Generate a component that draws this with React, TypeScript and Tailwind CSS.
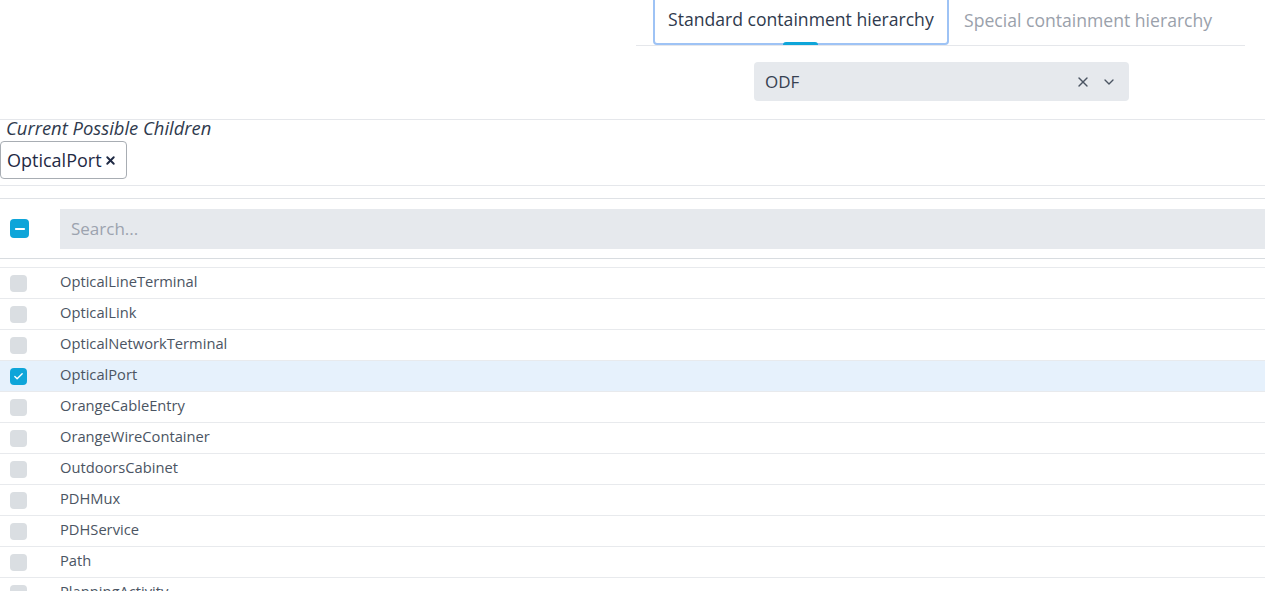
import { X, ChevronDown, Check, Minus } from "lucide-react";

const items = [
  "OpticalLineTerminal",
  "OpticalLink",
  "OpticalNetworkTerminal",
  "OpticalPort",
  "OrangeCableEntry",
  "OrangeWireContainer",
  "OutdoorsCabinet",
  "PDHMux",
  "PDHService",
  "Path",
  "PlanningActivity",
];

const selected = ["OpticalPort"];

export default function App() {
  return (
    <div className="h-[591px] w-[1265px] overflow-hidden bg-white font-['Open_Sans',sans-serif] text-[#374151]">
      {/* tabs + object select */}
      <div className="pl-[636px] pr-[20px]">
        <div className="flex h-[46px] border-b border-[#e5e7eb] pl-[17px]">
          <div className="relative -mt-[2px] flex h-[47px] w-[296px] items-center rounded-b-[4px] border-2 border-[#9ec3f5] pb-[4px] pl-[13px] text-[17.6px] text-[#2f3a4d]">
            Standard containment hierarchy
            <span className="absolute bottom-[-2px] left-[128px] h-[3px] w-[35px] rounded-t bg-[#0ea5d9]" />
          </div>
          <div className="flex items-center pb-[4px] pl-[15px] text-[17.6px] text-[#9aa1ab]">
            Special containment hierarchy
          </div>
        </div>
        <div className="flex justify-start pt-[16px] pl-[118px]">
          <div className="flex h-[39px] w-[375px] items-center rounded-[4px] bg-[#e6e9ed] pl-[11px] pr-[12px] text-[17px] text-[#374151]">
            <span className="flex-1">ODF</span>
            <X className="h-[16px] w-[16px] text-[#4b5563]" strokeWidth={2} />
            <ChevronDown className="ml-[10px] h-[16px] w-[16px] text-[#4b5563]" strokeWidth={2} />
          </div>
        </div>
      </div>

      {/* current children */}
      <div className="mt-[18px] border-t border-[#e5e7eb] pb-[6px]">
        <div className="pl-[6px] text-[18.4px] italic leading-[16px] text-[#2f3a4d]">
          Current Possible Children
        </div>
        <div className="mt-[5px] inline-flex h-[38px] items-center rounded-[4px] border border-[#a8adb3] pl-[6px] pr-[9px] text-[18px] text-[#1f2a44]">
          OpticalPort
          <X className="ml-[2px] h-[13px] w-[13px] text-[#1f2a44]" strokeWidth={3.5} />
        </div>
      </div>

      {/* list */}
      <div className="border-t border-[#e5e7eb]" />
      <div className="mt-[12px] border-t border-[#dfe2e6]">
        <div className="flex h-[60px] items-start border-b border-[#d8dce0] pt-[10px] pl-[10px]">
          <div className="mt-[10px] flex h-[19px] w-[19px] items-center justify-center rounded-[4px] bg-[#0ea5d9]">
            <Minus className="h-[14px] w-[14px] text-white" strokeWidth={3.5} />
          </div>
          <div className="ml-[31px] flex h-[40px] flex-1 items-center bg-[#e6e9ed] pl-[11px] text-[17px] text-[#9ca3af]">
            Search...
          </div>
        </div>
        <div className="h-[9px] overflow-hidden border-b border-[#e8eaed]">
          <div className="-mt-[22px] pl-[10px]">
            <div className="h-[17px] w-[17px] rounded-[4px] bg-[#dadee2]" />
          </div>
        </div>
        {items.map((name) => {
          const on = selected.includes(name);
          return (
            <div
              key={name}
              className={`flex h-[31px] items-center border-b border-[#e8eaed] pb-[4px] pl-[10px] text-[14.7px] text-[#4b5563] ${on ? "bg-[#e6f1fc]" : ""}`}
            >
              {on ? (
                <div className="mt-[4px] flex h-[17px] w-[17px] items-center justify-center rounded-[4px] bg-[#0ea5d9]">
                  <Check className="h-[11px] w-[11px] text-white" strokeWidth={3} />
                </div>
              ) : (
                <div className="mt-[4px] h-[17px] w-[17px] rounded-[4px] bg-[#dadee2]" />
              )}
              <span className="ml-[33px]">{name}</span>
            </div>
          );
        })}
      </div>
    </div>
  );
}
